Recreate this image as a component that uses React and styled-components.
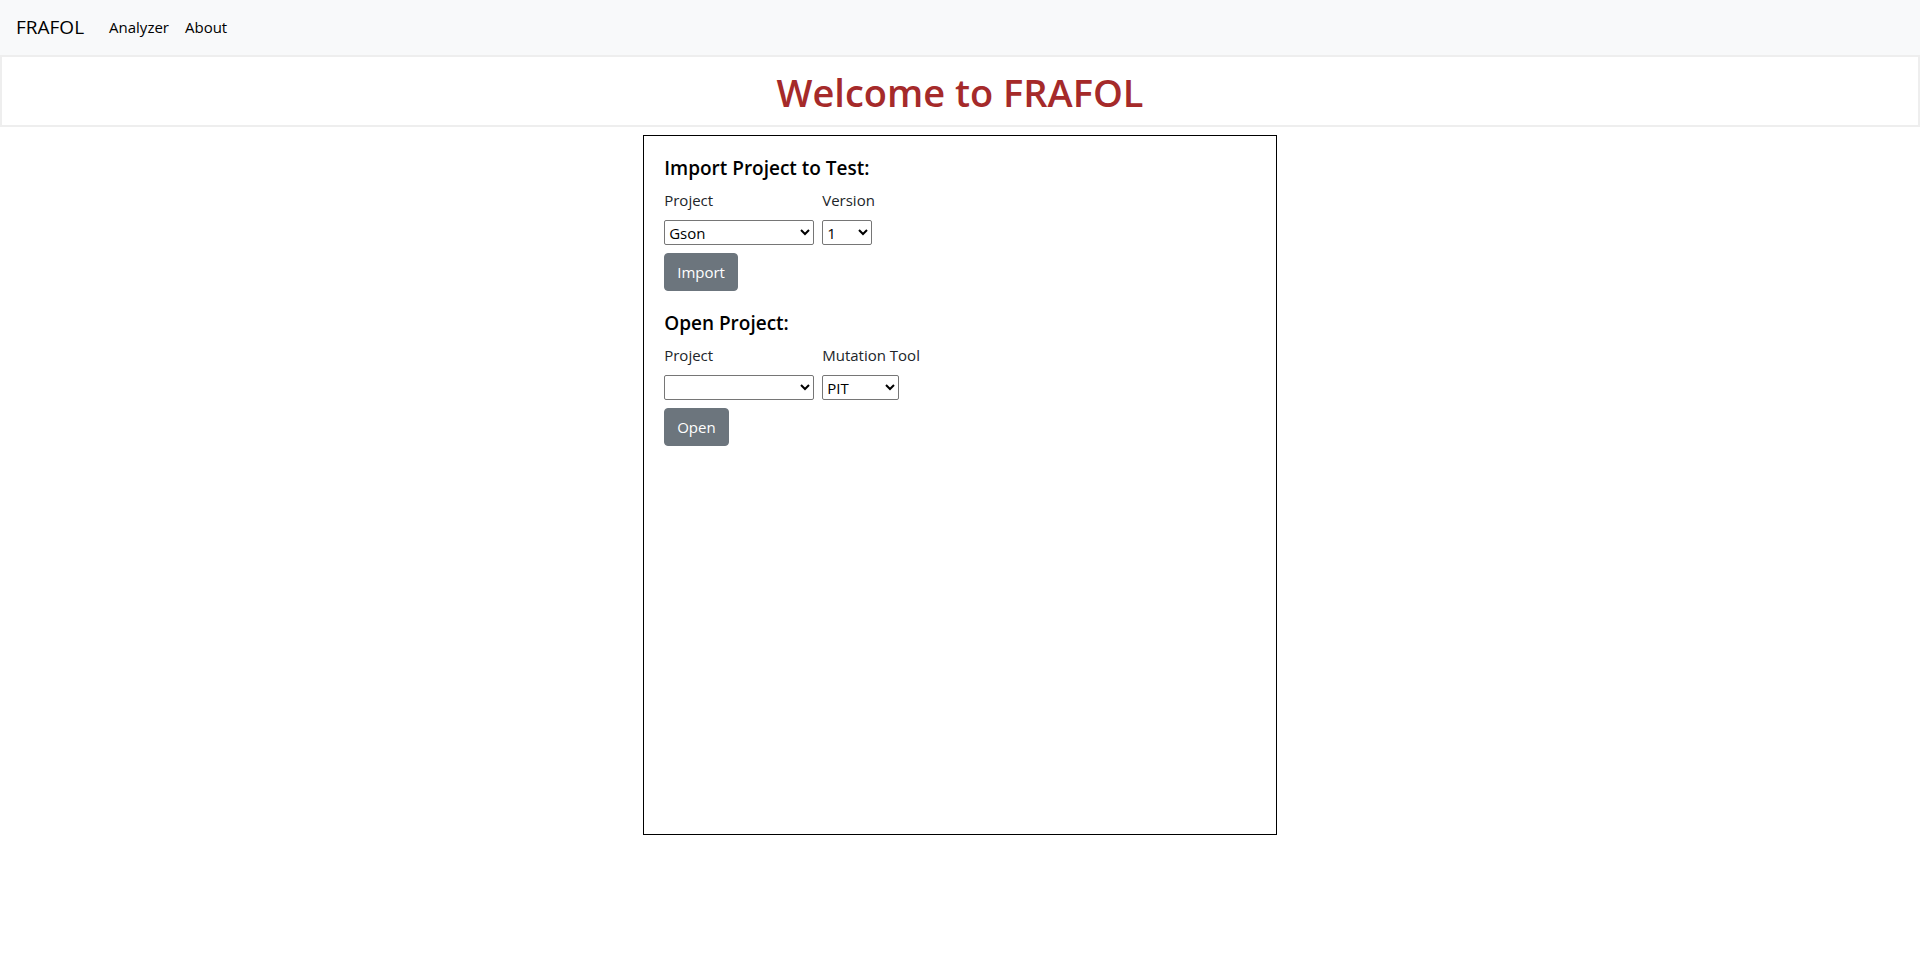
import React from "react";
import styled, { createGlobalStyle } from "styled-components";

const GlobalStyle = createGlobalStyle`
  *, *::before, *::after { box-sizing: border-box; }
  body {
    margin: 0;
    background: #fff;
    color: #212529;
    font-family: "Segoe UI", "Open Sans", "Noto Sans", sans-serif;
    font-size: 15px;
    line-height: 24px;
  }
`;

const Navbar = styled.nav`
  display: flex;
  align-items: center;
  gap: 25px;
  height: 55px;
  padding: 0 16px 2px;
  background: #f8f9fa;
`;

const Brand = styled.a`
  color: #000;
  font-size: 19px;
  text-decoration: none;
`;

const NavLinks = styled.div`
  display: flex;
  gap: 16px;
`;

const NavLink = styled.a`
  color: #000;
  text-decoration: none;
`;

const Banner = styled.header`
  padding: 11px 10px 9px;
  border: 2px solid #eee;
  text-align: center;
`;

const Title = styled.h1`
  margin: 0;
  color: brown;
  font-size: 38px;
  font-weight: 600;
  line-height: 48px;
`;

const Panel = styled.main`
  display: flex;
  flex-direction: column;
  gap: 20px;
  width: 33%;
  min-height: 700px;
  margin: 8px auto;
  padding: 20px;
  border: 1px solid #000;
`;

const ProjectForm = styled.form`
  display: flex;
  flex-direction: column;
  align-items: flex-start;
  gap: 8px;
`;

const Heading = styled.h2`
  margin: 0;
  color: #000;
  font-size: 19px;
  font-weight: 600;
  line-height: 24px;
`;

const Fields = styled.div`
  display: flex;
  gap: 8px;
`;

const Field = styled.div`
  display: flex;
  flex-direction: column;
  align-items: flex-start;
  gap: 8px;
`;

const Select = styled.select`
  width: ${(p) => p.$width}px;
  height: 25px;
  border: 1px solid #767676;
  border-radius: 2px;
  background-color: #fff;
  color: #000;
  font-family: inherit;
  font-size: 15px;
`;

const Button = styled.button`
  height: 38px;
  padding: 0 12px;
  border: 1px solid #6c757d;
  border-radius: 4px;
  background: #6c757d;
  color: #fff;
  font-family: inherit;
  font-size: 15px;
  line-height: 24px;
`;

function SelectField({ id, label, width, options }) {
  return (
    <Field>
      <label htmlFor={id}>{label}</label>
      <Select id={id} $width={width}>
        {options.map((option) => (
          <option key={option}>{option}</option>
        ))}
      </Select>
    </Field>
  );
}

export default function App() {
  const keepPage = (event) => event.preventDefault();

  return (
    <>
      <GlobalStyle />
      <Navbar>
        <Brand href="#">FRAFOL</Brand>
        <NavLinks>
          <NavLink href="#analyzer">Analyzer</NavLink>
          <NavLink href="#about">About</NavLink>
        </NavLinks>
      </Navbar>
      <Banner>
        <Title>Welcome to FRAFOL</Title>
      </Banner>
      <Panel>
        <ProjectForm onSubmit={keepPage}>
          <Heading>Import Project to Test:</Heading>
          <Fields>
            <SelectField id="import-project" label="Project" width={150} options={["Gson"]} />
            <SelectField id="import-version" label="Version" width={50} options={["1"]} />
          </Fields>
          <Button type="submit">Import</Button>
        </ProjectForm>
        <ProjectForm onSubmit={keepPage}>
          <Heading>Open Project:</Heading>
          <Fields>
            <SelectField id="open-project" label="Project" width={150} options={[""]} />
            <SelectField id="open-tool" label="Mutation Tool" width={77} options={["PIT"]} />
          </Fields>
          <Button type="submit">Open</Button>
        </ProjectForm>
      </Panel>
    </>
  );
}
